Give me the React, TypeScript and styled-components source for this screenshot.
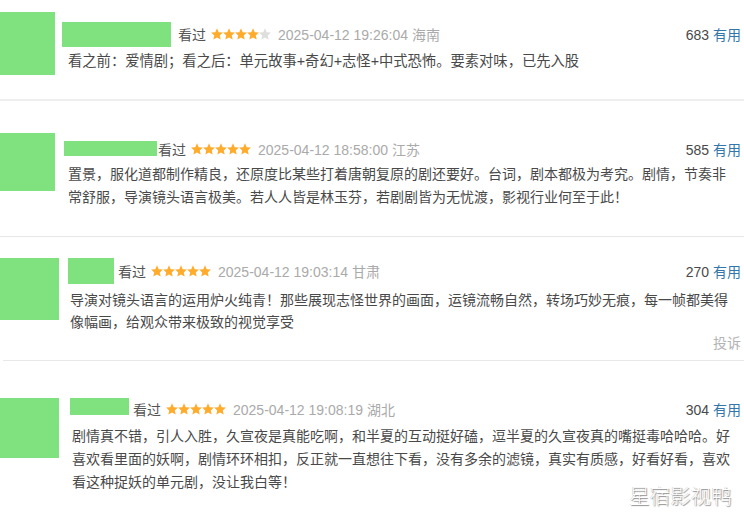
import React from "react";
import styled, { createGlobalStyle } from "styled-components";

const Global = createGlobalStyle`
  html, body { margin: 0; padding: 0; background: #fff; }
  body { font-family: "Liberation Sans", Arial, "Noto Sans CJK SC", sans-serif; }
`;

const Page = styled.div`
  position: relative;
  width: 744px;
  height: 517px;
  overflow: hidden;
  background: #fff;
  color: #494949;
`;

const Comment = styled.div<{ $h: number; $line: string; $lineLeft: number }>`
  display: flex;
  height: ${(p) => p.$h}px;
  margin-left: ${(p) => p.$lineLeft}px;
  padding-left: 0;
  border-bottom: ${(p) => p.$line};
  & > :first-child {
    margin-left: ${(p) => -p.$lineLeft}px;
  }
`;

const Avatar = styled.div<{ $top: number; $w: number; $h: number }>`
  flex: none;
  margin-top: ${(p) => p.$top}px;
  width: ${(p) => p.$w}px;
  height: ${(p) => p.$h}px;
  background: #80e27e;
`;

const Main = styled.div<{ $left: number; $top: number }>`
  flex: 1;
  display: flex;
  flex-direction: column;
  margin-left: ${(p) => p.$left}px;
  padding-top: ${(p) => p.$top}px;
  padding-right: 3px;
  min-width: 0;
`;

const Header = styled.div<{ $h: number }>`
  display: flex;
  align-items: center;
  height: ${(p) => p.$h}px;
  font-size: 14px;
  white-space: nowrap;
`;

const NameBar = styled.div<{ $w: number; $h: number; $gap: number }>`
  flex: none;
  align-self: flex-start;
  width: ${(p) => p.$w}px;
  height: ${(p) => p.$h}px;
  margin-right: ${(p) => p.$gap}px;
  background: #80e27e;
`;

const Watched = styled.span`
  color: #555;
`;

const StarsWrap = styled.span`
  display: inline-flex;
  margin-left: 5px;
`;

const DateText = styled.span`
  margin-left: 7px;
  color: #aaa;
`;

const Votes = styled.span`
  margin-left: auto;
  color: #494949;
`;

const Useful = styled.span`
  margin-left: 4px;
  color: #3377aa;
`;

const Content = styled.div<{ $mt: number; $lh: number; $indent: number; $fs: number }>`
  margin-top: ${(p) => p.$mt}px;
  padding-left: ${(p) => p.$indent}px;
  font-size: ${(p) => p.$fs}px;
  line-height: ${(p) => p.$lh}px;
  color: #494949;
`;

const Report = styled.div`
  align-self: flex-end;
  font-size: 14px;
  line-height: 20px;
  color: #b3b3b3;
`;

const Watermark = styled.div`
  position: absolute;
  left: 629px;
  top: 480px;
  font-family: "Noto Sans CJK SC", sans-serif;
  font-weight: 300;
  font-size: 20.5px;
  color: #fff;
  text-shadow: 1px 1px 1px rgba(0, 0, 0, 0.45), -0.5px -0.5px 0.5px rgba(0, 0, 0, 0.25);
`;

const STAR =
  "M6 0.3 L7.7 4.15 L11.9 4.58 L8.76 7.4 L9.65 11.52 L6 9.4 L2.35 11.52 L3.24 7.4 L0.1 4.58 L4.3 4.15 Z";

const Stars: React.FC<{ n: number }> = ({ n }) => (
  <StarsWrap>
    <svg width="60" height="12" viewBox="0 0 60 12">
      {[0, 1, 2, 3, 4].map((i) => (
        <path
          key={i}
          d={STAR}
          transform={`translate(${i * 12} 0)`}
          fill={i < n ? "#ffac2d" : "#dedede"}
        />
      ))}
    </svg>
  </StarsWrap>
);

type Item = {
  h: number;
  line: string;
  lineLeft: number;
  avTop: number;
  avW: number;
  avH: number;
  mainLeft: number;
  top: number;
  headerH: number;
  nameW: number;
  nameH: number;
  nameGap: number;
  stars: number;
  date: string;
  votes: number;
  mt: number;
  lh: number;
  fs: number;
  indent: number;
  text: string[];
  report?: boolean;
};

const items: Item[] = [
  {
    h: 99,
    line: "2px solid #eeeeee",
    lineLeft: 0,
    avTop: 12,
    avW: 55,
    avH: 63,
    mainLeft: 7,
    top: 22,
    headerH: 23,
    nameW: 109,
    nameH: 25,
    nameGap: 7,
    stars: 4,
    date: "2025-04-12 19:26:04 海南",
    votes: 683,
    mt: 5,
    lh: 22,
    fs: 14.3,
    indent: 6,
    text: ["看之前：爱情剧；看之后：单元故事+奇幻+志怪+中式恐怖。要素对味，已先入股"],
  },
  {
    h: 135,
    line: "1px solid #e6e6e6",
    lineLeft: 0,
    avTop: 32,
    avW: 55,
    avH: 58,
    mainLeft: 9,
    top: 40,
    headerH: 15,
    nameW: 93,
    nameH: 15,
    nameGap: 1,
    stars: 5,
    date: "2025-04-12 18:58:00 江苏",
    votes: 585,
    mt: 7,
    lh: 23,
    fs: 14,
    indent: 4,
    text: [
      "置景，服化道都制作精良，还原度比某些打着唐朝复原的剧还要好。台词，剧本都极为考究。剧情，节奏非",
      "常舒服，导演镜头语言极美。若人人皆是林玉芬，若剧剧皆为无忧渡，影视行业何至于此！",
    ],
  },
  {
    h: 123,
    line: "1px solid #e8e8e8",
    lineLeft: 3,
    avTop: 21,
    avW: 59,
    avH: 62,
    mainLeft: 9,
    top: 21,
    headerH: 26,
    nameW: 46,
    nameH: 26,
    nameGap: 4,
    stars: 5,
    date: "2025-04-12 19:03:14 甘肃",
    votes: 270,
    mt: 5,
    lh: 22,
    fs: 14,
    indent: 2,
    text: [
      "导演对镜头语言的运用炉火纯青！那些展现志怪世界的画面，运镜流畅自然，转场巧妙无痕，每一帧都美得",
      "像幅画，给观众带来极致的视觉享受",
    ],
    report: true,
  },
  {
    h: 160,
    line: "none",
    lineLeft: 0,
    avTop: 37,
    avW: 59,
    avH: 60,
    mainLeft: 11,
    top: 37,
    headerH: 22,
    nameW: 59,
    nameH: 17,
    nameGap: 4,
    stars: 5,
    date: "2025-04-12 19:08:19 湖北",
    votes: 304,
    mt: 5,
    lh: 23,
    fs: 14,
    indent: 2,
    text: [
      "剧情真不错，引人入胜，久宣夜是真能吃啊，和半夏的互动挺好磕，逗半夏的久宣夜真的嘴挺毒哈哈哈。好",
      "喜欢看里面的妖啊，剧情环环相扣，反正就一直想往下看，没有多余的滤镜，真实有质感，好看好看，喜欢",
      "看这种捉妖的单元剧，没让我白等！",
    ],
  },
];

export default function App() {
  return (
    <Page>
      <Global />
      {items.map((it, idx) => (
        <Comment key={idx} $h={it.h} $line={it.line} $lineLeft={it.lineLeft}>
          <Avatar $top={it.avTop} $w={it.avW} $h={it.avH} />
          <Main $left={it.mainLeft} $top={it.top}>
            <Header $h={it.headerH}>
              <NameBar $w={it.nameW} $h={it.nameH} $gap={it.nameGap} />
              <Watched>看过</Watched>
              <Stars n={it.stars} />
              <DateText>{it.date}</DateText>
              <Votes>
                {it.votes}
                <Useful>有用</Useful>
              </Votes>
            </Header>
            <Content $mt={it.mt} $lh={it.lh} $indent={it.indent} $fs={it.fs}>
              {it.text.map((t, i) => (
                <div key={i}>{t}</div>
              ))}
            </Content>
            {it.report && <Report>投诉</Report>}
          </Main>
        </Comment>
      ))}
      <Watermark>星宿影视鸭</Watermark>
    </Page>
  );
}
